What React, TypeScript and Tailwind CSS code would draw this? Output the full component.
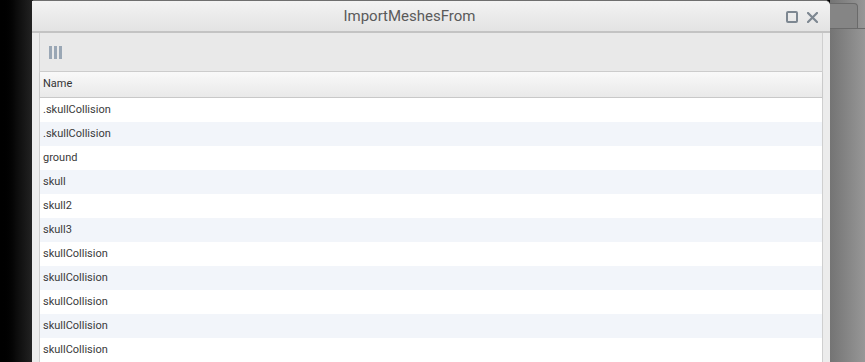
import { FC } from 'react';

const rows = [
  '.skullCollision',
  '.skullCollision',
  'ground',
  'skull',
  'skull2',
  'skull3',
  'skullCollision',
  'skullCollision',
  'skullCollision',
  'skullCollision',
  'skullCollision',
];

const App: FC = () => {
  return (
    <div
      className="flex h-[362px] w-[865px] overflow-hidden bg-black"
      style={{ fontFamily: 'Roboto, "Liberation Sans", sans-serif' }}
    >
      {/* dark backdrop on the left */}
      <div className="w-[32px] shrink-0 bg-gradient-to-r from-black via-[#0b0b0b] to-[#222]" />

      {/* window */}
      <div className="flex w-[798px] shrink-0 flex-col rounded-tl-[2px] rounded-tr-[5px] border-t border-[#6f6f6f] bg-[#ececec]">
        <div className="relative flex h-[32px] shrink-0 items-center justify-center rounded-tr-[5px] border-b-2 border-[#c3c3c3] bg-gradient-to-b from-[#f3f3f3] to-[#e3e3e3] pr-[43px]">
          <span className="text-[15px] text-[#5a5a5a]">ImportMeshesFrom</span>
          <div className="absolute right-[12px] top-[10px] flex items-center gap-[9px]">
            <div className="h-[12px] w-[12px] rounded-[2px] border-2 border-[#7d8791]" />
            <svg width="11" height="11" viewBox="0 0 11 11">
              <path d="M1 1 L10 10 M10 1 L1 10" stroke="#7d8791" strokeWidth="2.2" strokeLinecap="round" />
            </svg>
          </div>
        </div>

        <div className="flex flex-1 px-[7px]">
          <div className="flex flex-1 flex-col border-x border-[#cfcfcf] bg-white">
            {/* toolbar */}
            <div className="flex h-[39px] shrink-0 items-center border-b border-[#cdcdcd] bg-[#e9e9e9] pl-[9px]">
              <div className="flex gap-[2px]">
                <div className="h-[13px] w-[3px] bg-[#9aa7b5]" />
                <div className="h-[13px] w-[3px] bg-[#9aa7b5]" />
                <div className="h-[13px] w-[3px] bg-[#9aa7b5]" />
              </div>
            </div>

            {/* column header */}
            <div className="flex h-[26px] shrink-0 items-center border-b border-[#c8c8c8] bg-gradient-to-b from-[#f9f9f9] to-[#e9e9e9] pl-[3px] text-[11px] text-[#333] shadow-[0_1px_2px_rgba(0,0,0,0.08)]">
              Name
            </div>

            {rows.map((name, i) => (
              <div
                key={i}
                className={`flex h-[24px] shrink-0 items-center pl-[3px] text-[11px] text-[#3a3a3a] ${
                  i % 2 === 1 ? 'bg-[#f2f5fa]' : 'bg-white'
                }`}
              >
                {name}
              </div>
            ))}
          </div>
        </div>
      </div>

      {/* backdrop on the right */}
      <div className="flex flex-1 flex-col bg-gradient-to-r from-[#747474] to-[#979797]">
        <div className="flex h-[29px] shrink-0 items-end border-b border-[#6a6a6a] pt-[3px]">
          <div className="h-full w-[28px] rounded-tr-[4px] border-r border-t border-[#6a6a6a] bg-[#858585]" />
        </div>
      </div>
    </div>
  );
};

export default App;
